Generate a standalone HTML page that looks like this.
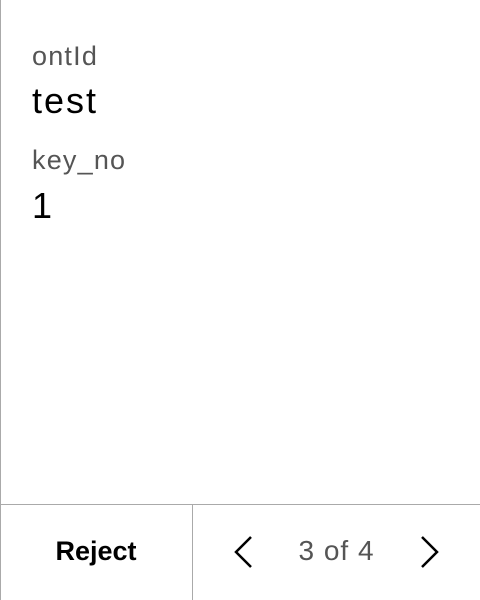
<!DOCTYPE html>
<html><head><style>
body{margin:0;width:480px;height:600px;background:#fff;position:relative;overflow:hidden;font-family:"Liberation Sans",sans-serif}
.lb{position:absolute;left:0;top:0;width:1px;height:600px;background:#aaa}
.t{position:absolute;left:32px;white-space:nowrap;line-height:1}
.l{font-size:27px;color:#555;letter-spacing:1.2px}
.v{font-size:36px;color:#000;letter-spacing:2px}
.h{position:absolute;left:0;top:504px;width:480px;height:1px;background:#aaa}
.vd{position:absolute;left:192px;top:504px;width:1px;height:96px;background:#aaa}
</style></head><body>
<div class="lb"></div>
<div class="t l" style="top:43px">ontId</div>
<div class="t v" style="top:83px">test</div>
<div class="t l" style="top:147px">key_no</div>
<div class="t v" style="top:188px">1</div>
<div class="h"></div><div class="vd"></div>
<div style="position:absolute;left:0;width:192px;top:537px;text-align:center;font-size:27px;font-weight:bold;line-height:28px">Reject</div>
<div style="position:absolute;left:193px;width:287px;top:537px;text-align:center;font-size:28px;color:#555;line-height:28px;letter-spacing:1px">3 of 4</div>
<svg style="position:absolute;left:0;top:0" width="480" height="600"><path d="M251 537 L236 552 L251 567 M422 537 L437 552 L422 567" fill="none" stroke="#000" stroke-width="2.5"/></svg>
</body></html>
